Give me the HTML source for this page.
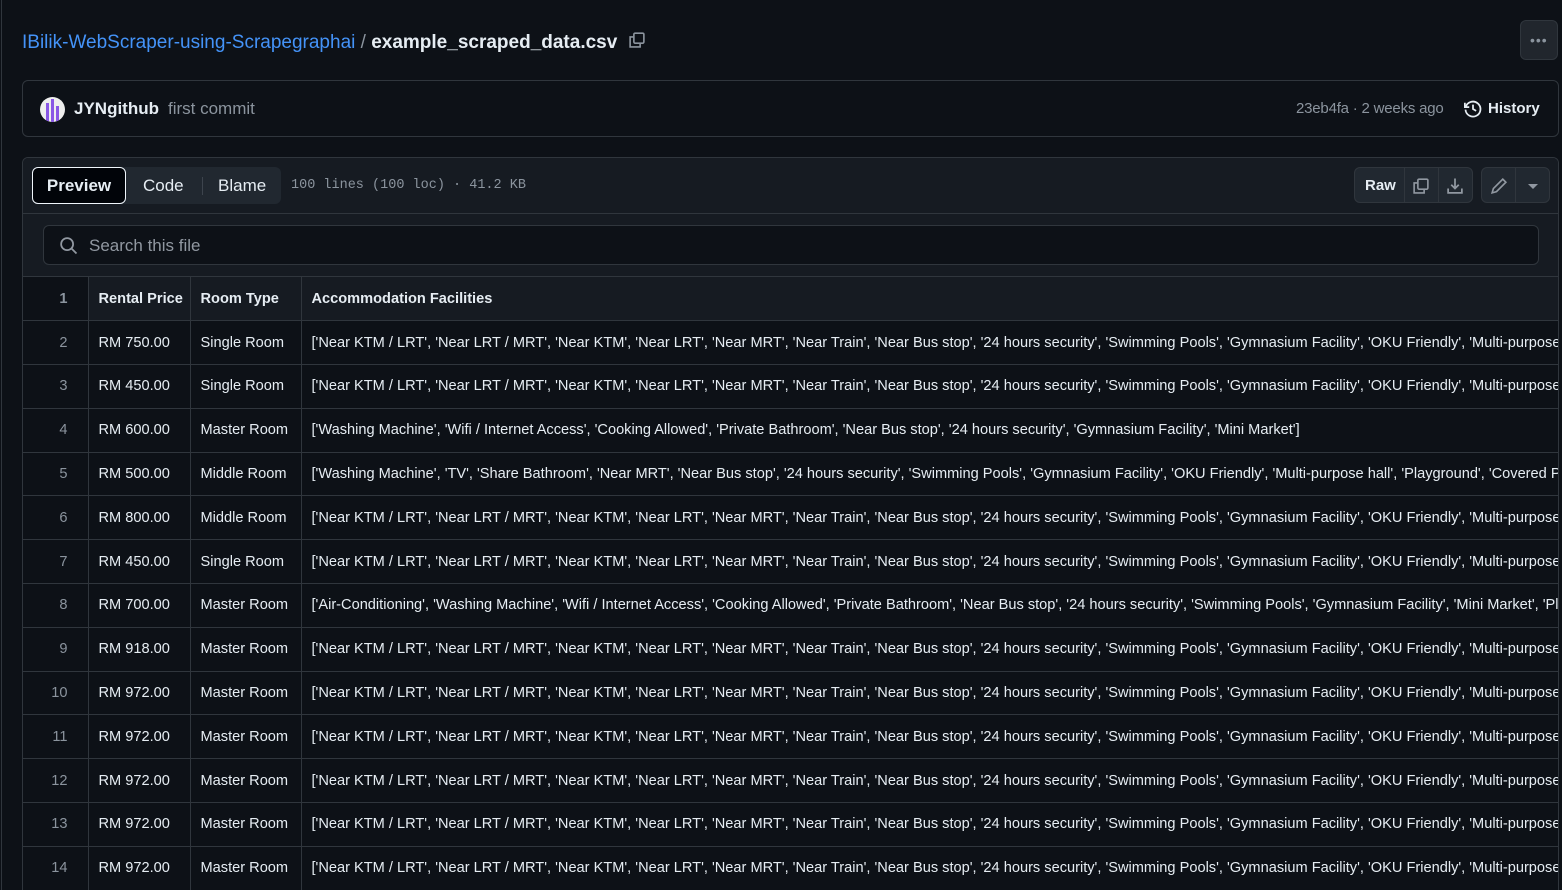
<!DOCTYPE html>
<html style="overflow:hidden;height:890px"><head><meta charset="utf-8"><style>
*{box-sizing:border-box;margin:0;padding:0}
body{width:1562px;height:890px;overflow:hidden;background:#0d1117;font-family:"Liberation Sans",sans-serif;color:#e6edf3;position:relative}
.abs{position:absolute}
.lb{left:1px;top:0;width:1px;height:890px;background:#30363d}
.crumb{left:22px;top:30px;font-size:19px;white-space:nowrap}
.crumb a{color:#4493f8;text-decoration:none}
.crumb .sep{color:#8b949e}
.crumb b{font-weight:600}
.more{left:1520px;top:20px;width:38px;height:40px;background:#21262d;border:1px solid #30363d;border-radius:6px}
.commit{left:22px;top:80px;width:1537px;height:57px;border:1px solid #30363d;border-radius:6px}
.box{left:22px;top:157px;width:1537px;height:733px;border:1px solid #30363d;border-bottom:none;border-radius:6px 6px 0 0;overflow:hidden;background:#0d1117}
.hdr{left:0;top:0;width:100%;height:56px;background:#161b22;border-bottom:1px solid #30363d}
.seg{left:9px;top:9px;width:249px;height:37px;background:#212830;border-radius:6px}
.btn{border:1px solid #30363d;border-radius:6px;background:#212830}
.srch{left:0;top:56px;width:100%;height:63px;background:#161b22;border-bottom:1px solid #30363d}
table{position:absolute;left:0;top:119px;border-collapse:collapse;font-size:14.6px;white-space:nowrap;table-layout:fixed;width:1600px}
td{height:43.8px;border-right:1px solid #30363d;border-bottom:1px solid #30363d;padding:0 10px;vertical-align:middle;overflow:hidden}
td.n{text-align:right;padding:0 20px 0 0;color:#8b949e;background:#0d1117}
tr.h td{background:#161b22;font-weight:bold}
tr.h td.n{background:#0d1117;font-weight:bold}
</style></head><body>
<div class="abs lb"></div>
<div class="abs crumb"><a>IBilik-WebScraper-using-Scrapegraphai</a> <span class="sep">/</span> <b>example_scraped_data.csv</b>
<svg width="20" height="20" viewBox="0 0 16 16" style="vertical-align:-2px;margin-left:4px" fill="none" stroke="#8b949e" stroke-width="1.3"><path d="M5.5 5.5h-3v8h8v-3"/><rect x="5.5" y="2.5" width="8" height="8" rx="1"/></svg></div>
<div class="abs more"><div class="abs" style="left:9px;top:17px;color:#8b949e;font-size:14px;letter-spacing:1px;line-height:4px">•••</div></div>
<div class="abs commit">
<div class="abs" style="left:17px;top:16px;width:25px;height:25px;border-radius:50%;background:#eee;overflow:hidden"><div class="abs" style="left:6px;top:6px;width:3px;height:19px;background:#8957e5"></div><div class="abs" style="left:11px;top:2px;width:3px;height:23px;background:#8957e5"></div><div class="abs" style="left:16px;top:9px;width:3px;height:16px;background:#8957e5"></div></div>
<div class="abs" style="left:51px;top:18px;font-size:17px;font-weight:bold">JYNgithub</div>
<div class="abs" style="left:145px;top:18px;font-size:17px;color:#8b949e">first commit</div>
<div class="abs" style="left:1273px;top:19px;font-size:15px;color:#8b949e;letter-spacing:-0.2px">23eb4fa · 2 weeks ago</div>
<svg class="abs" style="left:1440px;top:18px" width="20" height="20" viewBox="0 0 16 16" fill="none" stroke="#e6edf3" stroke-width="1.4"><path d="M2.2 6.5A6 6 0 1 1 2 8.5"/><path d="M1.5 3v3.5H5"/><path d="M8 4.5V8l2.5 1.5"/></svg>
<div class="abs" style="left:1465px;top:19px;font-size:15px;font-weight:bold">History</div>
</div>
<div class="abs box">
<div class="abs hdr">
<div class="abs seg"></div>
<div class="abs" style="left:9px;top:9px;width:94px;height:37px;background:#010409;border:1px solid #f0f6fc;border-radius:6px;font-size:17px;font-weight:bold;text-align:center;line-height:35px">Preview</div>
<div class="abs" style="left:120px;top:18px;font-size:17px">Code</div>
<div class="abs" style="left:179px;top:19px;width:1px;height:18px;background:#3d444d"></div>
<div class="abs" style="left:195px;top:18px;font-size:17px">Blame</div>
<div class="abs" style="left:268px;top:20px;font-family:'Liberation Mono',monospace;font-size:13.5px;color:#8b949e">100 lines (100 loc) · 41.2 KB</div>
<div class="abs btn" style="left:1331px;top:9px;width:119px;height:36px"></div>
<div class="abs" style="left:1342px;top:19px;font-size:15px;font-weight:bold">Raw</div>
<div class="abs" style="left:1381px;top:10px;width:1px;height:34px;background:#30363d"></div>
<div class="abs" style="left:1415px;top:10px;width:1px;height:34px;background:#30363d"></div>
<svg class="abs" style="left:1388px;top:18px" width="20" height="20" viewBox="0 0 16 16" fill="none" stroke="#9198a1" stroke-width="1.3"><path d="M5.5 5.5h-3v8h8v-3"/><rect x="5.5" y="2.5" width="8" height="8" rx="1"/></svg>
<svg class="abs" style="left:1422px;top:18px" width="20" height="20" viewBox="0 0 16 16" fill="none" stroke="#9198a1" stroke-width="1.4"><path d="M2.5 10v3.5h11V10"/><path d="M8 2v8M5 7l3 3 3-3"/></svg>
<div class="abs btn" style="left:1458px;top:9px;width:69px;height:36px"></div>
<div class="abs" style="left:1492px;top:10px;width:1px;height:34px;background:#30363d"></div>
<svg class="abs" style="left:1466px;top:18px" width="20" height="20" viewBox="0 0 16 16" fill="none" stroke="#9198a1" stroke-width="1.3"><path d="M11 2.5l2.5 2.5L6 12.5l-3.5 1 1-3.5z"/></svg>
<div class="abs" style="left:1505px;top:26px;width:0;height:0;border-left:5px solid transparent;border-right:5px solid transparent;border-top:5px solid #9198a1"></div>
</div>
<div class="abs srch">
<div class="abs" style="left:20px;top:11px;width:1496px;height:40px;background:#0d1117;border:1px solid #30363d;border-radius:6px">
<svg class="abs" style="left:15px;top:10px" width="20" height="20" viewBox="0 0 16 16" fill="none" stroke="#9198a1" stroke-width="1.4"><circle cx="6.5" cy="6.5" r="4.8"/><path d="M10 10l4 4"/></svg>
<div class="abs" style="left:45px;top:10px;font-size:17px;color:#9198a1">Search this file</div>
</div></div>
<table>
<colgroup><col style="width:65px"><col style="width:102px"><col style="width:111px"><col style="width:1322px"></colgroup>
<tr class="h"><td class="n">1</td><td>Rental Price</td><td>Room Type</td><td>Accommodation Facilities</td></tr>
<tr><td class="n">2</td><td>RM 750.00</td><td>Single Room</td><td>['Near KTM / LRT', 'Near LRT / MRT', 'Near KTM', 'Near LRT', 'Near MRT', 'Near Train', 'Near Bus stop', '24 hours security', 'Swimming Pools', 'Gymnasium Facility', 'OKU Friendly', 'Multi-purpose hall']</td></tr>
<tr><td class="n">3</td><td>RM 450.00</td><td>Single Room</td><td>['Near KTM / LRT', 'Near LRT / MRT', 'Near KTM', 'Near LRT', 'Near MRT', 'Near Train', 'Near Bus stop', '24 hours security', 'Swimming Pools', 'Gymnasium Facility', 'OKU Friendly', 'Multi-purpose hall']</td></tr>
<tr><td class="n">4</td><td>RM 600.00</td><td>Master Room</td><td>['Washing Machine', 'Wifi / Internet Access', 'Cooking Allowed', 'Private Bathroom', 'Near Bus stop', '24 hours security', 'Gymnasium Facility', 'Mini Market']</td></tr>
<tr><td class="n">5</td><td>RM 500.00</td><td>Middle Room</td><td>['Washing Machine', 'TV', 'Share Bathroom', 'Near MRT', 'Near Bus stop', '24 hours security', 'Swimming Pools', 'Gymnasium Facility', 'OKU Friendly', 'Multi-purpose hall', 'Playground', 'Covered Parking']</td></tr>
<tr><td class="n">6</td><td>RM 800.00</td><td>Middle Room</td><td>['Near KTM / LRT', 'Near LRT / MRT', 'Near KTM', 'Near LRT', 'Near MRT', 'Near Train', 'Near Bus stop', '24 hours security', 'Swimming Pools', 'Gymnasium Facility', 'OKU Friendly', 'Multi-purpose hall']</td></tr>
<tr><td class="n">7</td><td>RM 450.00</td><td>Single Room</td><td>['Near KTM / LRT', 'Near LRT / MRT', 'Near KTM', 'Near LRT', 'Near MRT', 'Near Train', 'Near Bus stop', '24 hours security', 'Swimming Pools', 'Gymnasium Facility', 'OKU Friendly', 'Multi-purpose hall']</td></tr>
<tr><td class="n">8</td><td>RM 700.00</td><td>Master Room</td><td>['Air-Conditioning', 'Washing Machine', 'Wifi / Internet Access', 'Cooking Allowed', 'Private Bathroom', 'Near Bus stop', '24 hours security', 'Swimming Pools', 'Gymnasium Facility', 'Mini Market', 'Playground']</td></tr>
<tr><td class="n">9</td><td>RM 918.00</td><td>Master Room</td><td>['Near KTM / LRT', 'Near LRT / MRT', 'Near KTM', 'Near LRT', 'Near MRT', 'Near Train', 'Near Bus stop', '24 hours security', 'Swimming Pools', 'Gymnasium Facility', 'OKU Friendly', 'Multi-purpose hall']</td></tr>
<tr><td class="n">10</td><td>RM 972.00</td><td>Master Room</td><td>['Near KTM / LRT', 'Near LRT / MRT', 'Near KTM', 'Near LRT', 'Near MRT', 'Near Train', 'Near Bus stop', '24 hours security', 'Swimming Pools', 'Gymnasium Facility', 'OKU Friendly', 'Multi-purpose hall']</td></tr>
<tr><td class="n">11</td><td>RM 972.00</td><td>Master Room</td><td>['Near KTM / LRT', 'Near LRT / MRT', 'Near KTM', 'Near LRT', 'Near MRT', 'Near Train', 'Near Bus stop', '24 hours security', 'Swimming Pools', 'Gymnasium Facility', 'OKU Friendly', 'Multi-purpose hall']</td></tr>
<tr><td class="n">12</td><td>RM 972.00</td><td>Master Room</td><td>['Near KTM / LRT', 'Near LRT / MRT', 'Near KTM', 'Near LRT', 'Near MRT', 'Near Train', 'Near Bus stop', '24 hours security', 'Swimming Pools', 'Gymnasium Facility', 'OKU Friendly', 'Multi-purpose hall']</td></tr>
<tr><td class="n">13</td><td>RM 972.00</td><td>Master Room</td><td>['Near KTM / LRT', 'Near LRT / MRT', 'Near KTM', 'Near LRT', 'Near MRT', 'Near Train', 'Near Bus stop', '24 hours security', 'Swimming Pools', 'Gymnasium Facility', 'OKU Friendly', 'Multi-purpose hall']</td></tr>
<tr><td class="n">14</td><td>RM 972.00</td><td>Master Room</td><td>['Near KTM / LRT', 'Near LRT / MRT', 'Near KTM', 'Near LRT', 'Near MRT', 'Near Train', 'Near Bus stop', '24 hours security', 'Swimming Pools', 'Gymnasium Facility', 'OKU Friendly', 'Multi-purpose hall']</td></tr>
</table>
</div>
</body></html>
